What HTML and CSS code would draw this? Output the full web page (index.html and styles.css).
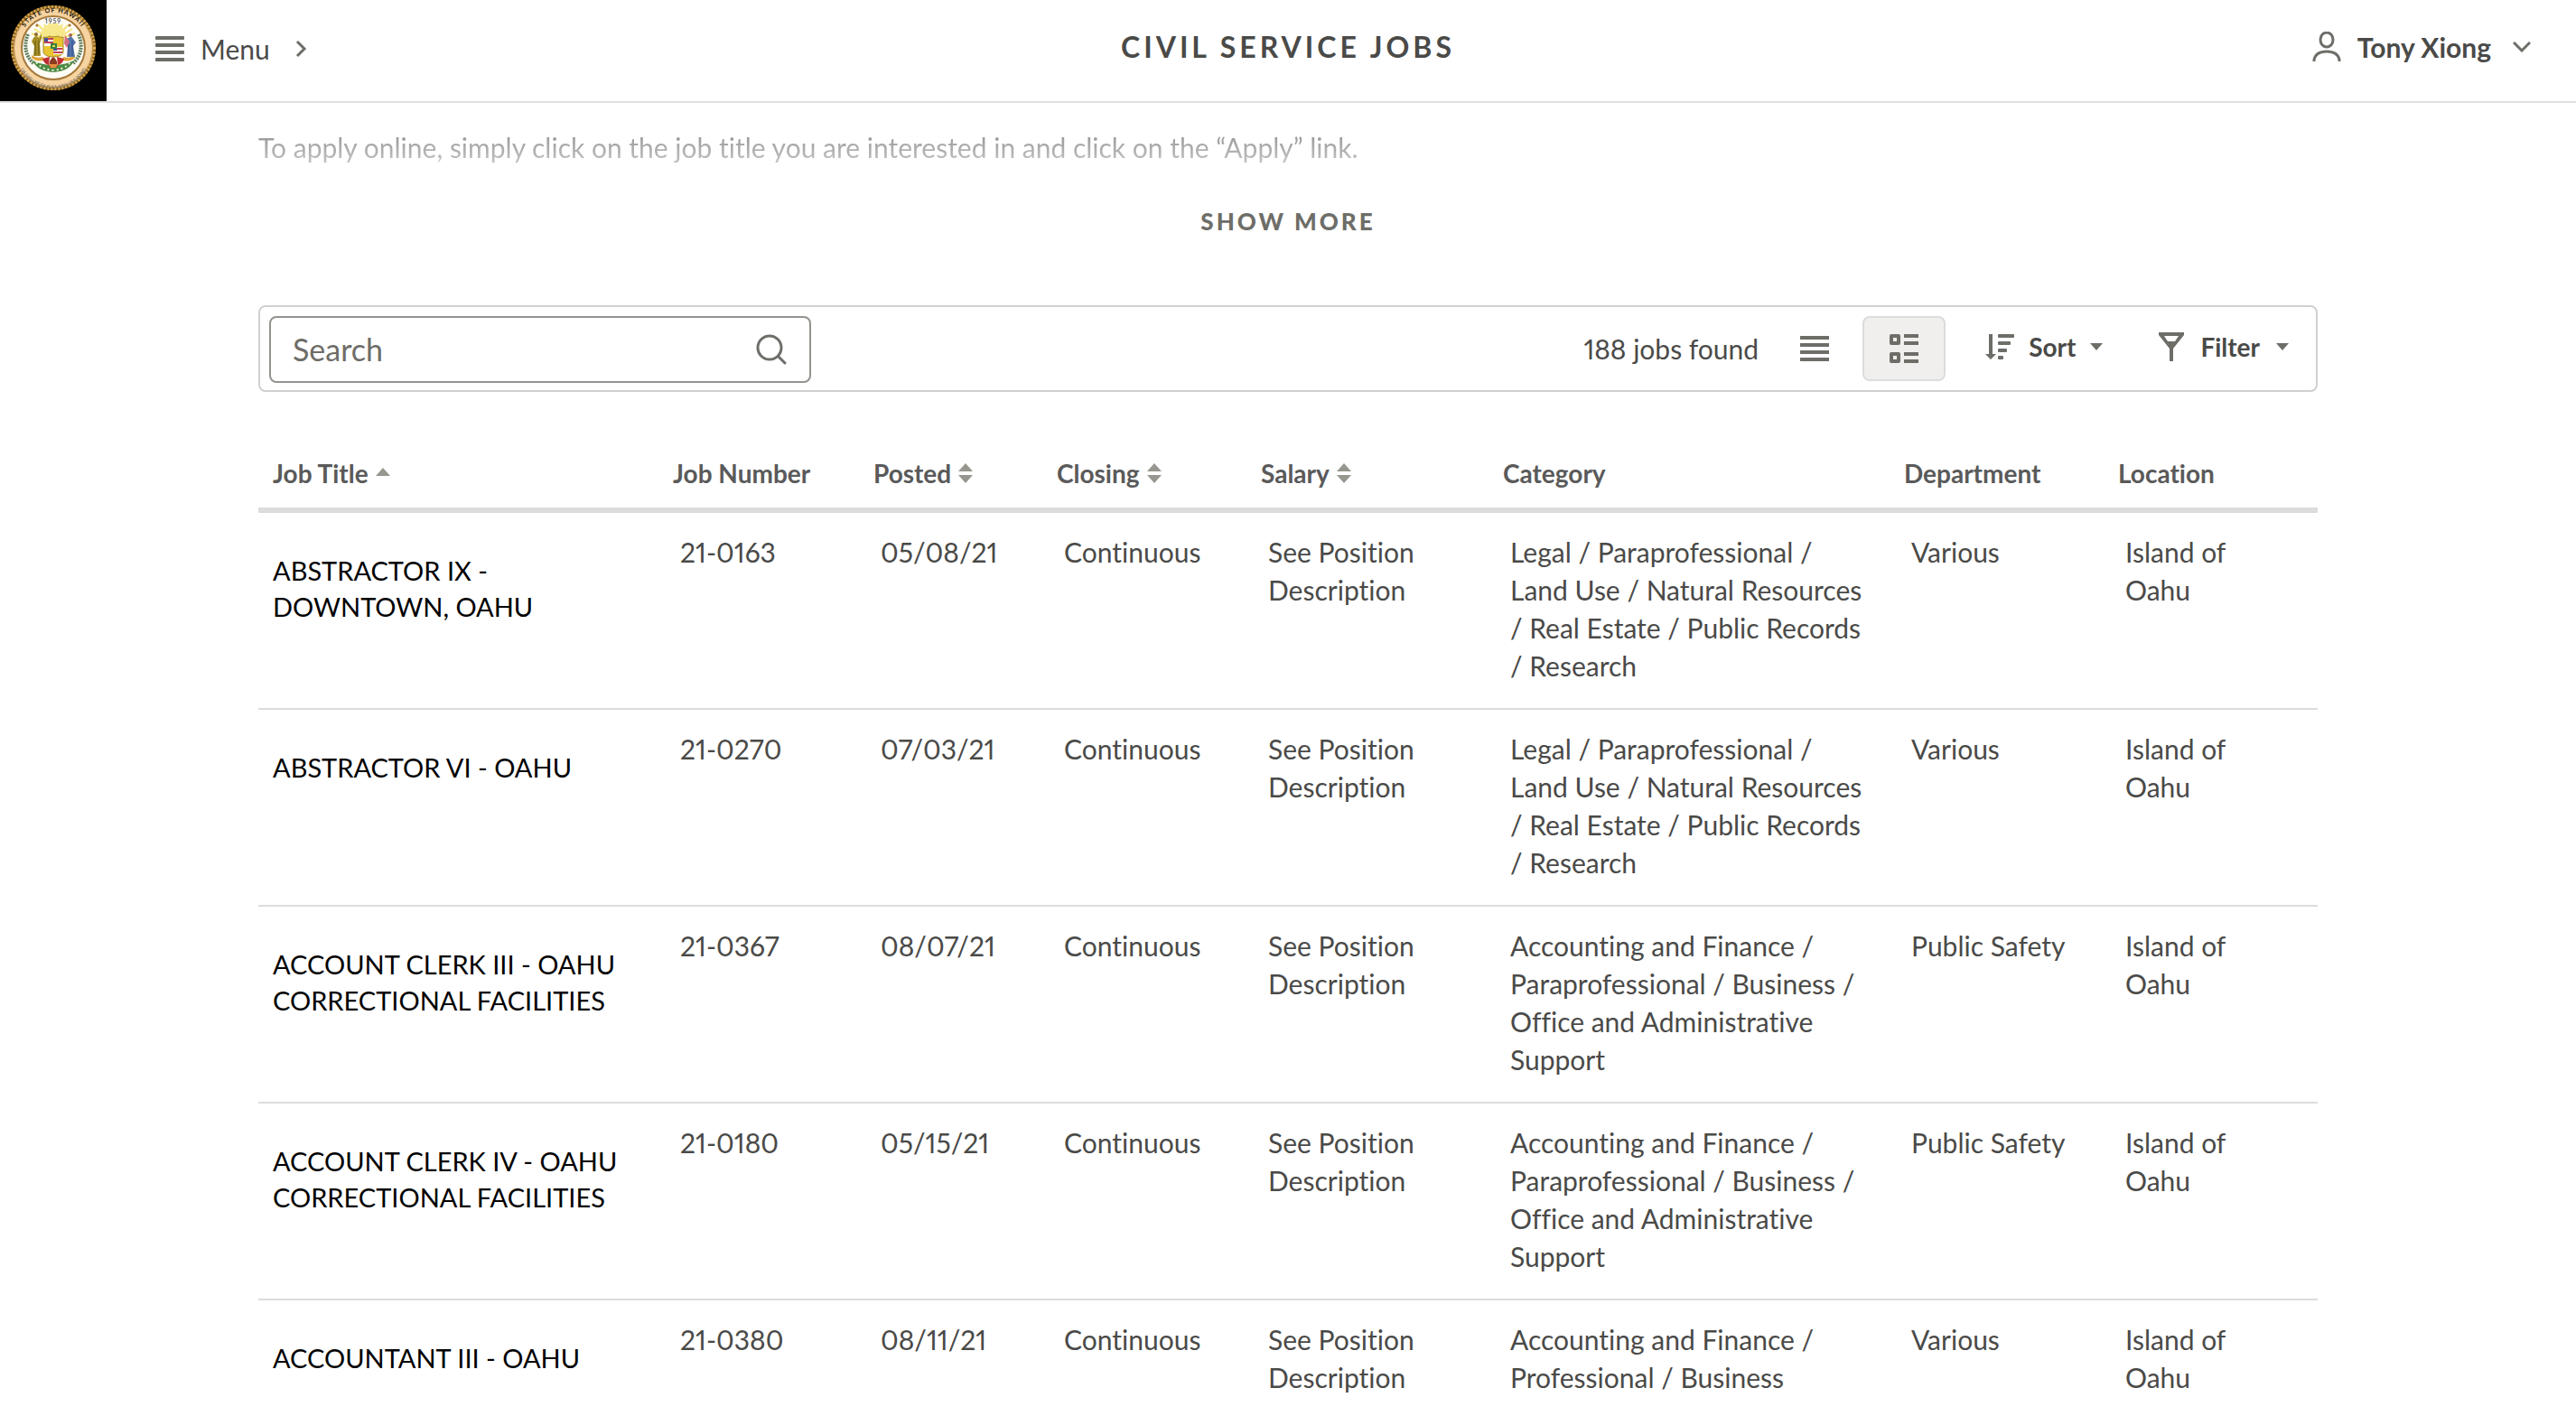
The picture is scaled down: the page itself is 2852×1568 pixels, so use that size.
FILE: index.html
```html
<!DOCTYPE html>
<html lang="en">
<head>
<meta charset="utf-8">
<meta name="viewport" content="width=device-width, initial-scale=1">
<title>Civil Service Jobs</title>
<link rel="stylesheet" href="styles.css">
</head>
<body>
<header class="topbar">
  <div class="topbar-side">
    <a class="brand" href="#" aria-label="State of Hawaii home">
      <svg class="seal" viewBox="0 0 118 112" aria-hidden="true">
        <defs>
          <path id="arc-top" d="M21 46a38.500 38.500 0 0 1 76 0"/>
          <path id="arc-bottom" d="M17 56a42 42 0 0 0 84 0"/>
        </defs>
        <circle cx="59" cy="53" r="45.500" fill="#f6d3a0" stroke="#8a6526" stroke-width="3"/>
        <circle cx="59" cy="53" r="45.500" fill="none" stroke="#d9a94e" stroke-width="3" stroke-dasharray="2 2"/>
        <circle cx="59" cy="53" r="43.500" fill="none" stroke="#b88a45"/>
        <circle cx="59" cy="53" r="35" fill="#fffdf6" stroke="#a5783a" stroke-width="2"/>
        <path d="M59 46 38 32M59 46 43 28M59 46 49 27M59 46 55 26M59 46 63 26M59 46 69 27M59 46 75 28M59 46 80 32M59 46 35 37M59 46 83 37" stroke="#f5e27a" stroke-width="2"/>
        <path d="M45 40a14 14 0 0 1 28 0z" fill="#f7e88c"/>
        <text class="seal-name"><textPath href="#arc-top" startOffset="50%">STATE OF HAWAII</textPath></text>
        <text class="seal-motto"><textPath href="#arc-bottom" startOffset="50%">UA MAU KE EA O KA AINA I KA PONO</textPath></text>
        <text class="seal-year" x="59" y="26">1959</text>
        <path d="m41 26 2 2-2 2-2-2zM77 26l2 2-2 2-2-2z" fill="#a9792e"/>
        <path d="M31 38c-5 12-3 24 6 32M87 38c5 12 3 24-6 32" fill="none" stroke="#5d7d5b" stroke-width="4" stroke-dasharray="2 1"/>
        <path d="M36 67q5 12 23 13 18-1 23-13-10 5-23 5t-23-5z" fill="#4d8a42"/>
        <path d="M40 69q7 8 19 9 12-1 19-9" fill="none" stroke="#e6efd8" stroke-width="2" stroke-dasharray="2 3"/>
        <path d="M35 61q5 4 13 2v4q-8 2-13-3zM83 61q-5 4-13 2v4q8 2 13-3z" fill="#e0a63c"/>
        <path d="M37 42q3-4 6 0l3-5v6l-2 5 1 14h-8l1-11-3-5z" fill="#a68e25"/>
        <path d="M39 45v16M43 45v15" stroke="#635816"/>
        <circle cx="40" cy="38" r="2" fill="#8c6b2d"/>
        <path d="M76 42q3-3 5 1l3 4-3 4 2 12h-9l1-12-3-8z" fill="#5475ae"/>
        <path d="M72 39l5 7-3 7-3-5z" fill="#d46e82"/>
        <path d="M80 45v17M76 49v13" stroke="#354d83"/>
        <circle cx="78" cy="39" r="2" fill="#9a6658"/>
        <path d="M48 41q5 1 6-1 5 2 10 0 2 2 6 1v17q-2 5-11 5t-11-5z" fill="#eac532" stroke="#a2892b"/>
        <path d="M49 42h10v9H49zM59 52h10v8H59z" fill="#fff"/>
        <path d="M49 43h10M49 47h10M59 54h10M59 58h10" stroke="#bf4052" stroke-width="2"/>
        <path d="M49 42h4v4h-4zM59 52h4v4h-4z" fill="#40519b"/>
        <path d="M56 48h7v6h-7z" fill="#37823c"/>
        <path d="M58 50h3v2h-3z" fill="#e9d45b"/>
        <path d="M47 65l8-2-1 9q-5-1-7-7zM71 65l-8-2 1 9q5-1 7-7z" fill="#bf2d33"/>
        <path d="M55 75q-2-8 4-12 6 4 4 12z" fill="#8b3a20"/>
        <path d="M54 71h10l-2 4h-6z" fill="#e8893c"/>
      </svg>
    </a>
    <button class="menu-button" type="button">
      <svg class="icon" width="32" height="28" viewBox="0 0 32 28" aria-hidden="true"><g fill="currentColor"><rect width="32" height="4" rx="1"/><rect y="8" width="32" height="4" rx="1"/><rect y="16" width="32" height="4" rx="1"/><rect y="24" width="32" height="4" rx="1"/></g></svg>
      <span>Menu</span>
      <svg class="icon menu-chevron" width="14" height="20" viewBox="0 0 14 20" aria-hidden="true"><path d="m2 2 8 8-8 8" fill="none" stroke="currentColor" stroke-width="3"/></svg>
    </button>
  </div>
  <h1 class="topbar-title">CIVIL SERVICE JOBS</h1>
  <div class="topbar-side topbar-end">
    <button class="user-button" type="button">
      <svg class="icon" width="32" height="34" viewBox="0 0 32 34" aria-hidden="true"><g fill="none" stroke="currentColor" stroke-width="3"><ellipse cx="16" cy="9" rx="7" ry="8"/><path d="M2 33v-2q2-9 14-9t14 9v2"/></g></svg>
      <span>Tony Xiong</span>
      <svg class="icon user-chevron" width="20" height="12" viewBox="0 0 20 12" aria-hidden="true"><path d="m1 1 9 9 9-9" fill="none" stroke="currentColor" stroke-width="3"/></svg>
    </button>
  </div>
</header>

<main class="page">
  <section class="intro">
    <p class="intro-text">To apply online, simply click on the job title you are interested in and click on the “Apply” link.</p>
    <button class="show-more" type="button">SHOW MORE</button>
  </section>

  <section class="toolbar" aria-label="Job list tools">
    <div class="search">
      <input class="search-input" type="text" placeholder="Search" aria-label="Search">
      <button class="search-button" type="button" aria-label="Run search">
        <svg class="icon" width="34" height="34" viewBox="0 0 34 34" aria-hidden="true"><g fill="none" stroke="currentColor" stroke-width="3" stroke-linecap="round"><circle cx="15" cy="15" r="13"/><path d="m25 25 7 7"/></g></svg>
      </button>
    </div>
    <div class="tools">
      <span class="job-count">188 jobs found</span>
      <div class="views">
        <button class="view-button" type="button" aria-label="List view">
          <svg class="icon" width="32" height="28" viewBox="0 0 32 28" aria-hidden="true"><path d="M0 0h32v4H0zM0 8h32v4H0zM0 16h32v4H0zM0 24h32v4H0z" fill="currentColor"/></svg>
        </button>
        <button class="view-button view-active" type="button" aria-label="Table view" aria-pressed="true">
          <svg class="icon" width="32" height="32" viewBox="0 0 32 32" aria-hidden="true"><g fill="none" stroke="currentColor" stroke-width="4" stroke-linejoin="round"><path d="M2 2h8v8H2zM2 22h8v8H2z"/><path d="M16 2h16M16 10h16M16 22h16M16 30h16"/></g></svg>
        </button>
      </div>
      <button class="tool-button" type="button">
        <svg class="icon" width="32" height="28" viewBox="0 0 32 28" aria-hidden="true"><g fill="currentColor"><path d="M4 0h4v22h4l-6 6-6-6h4z"/><rect x="14" width="18" height="4" rx="1"/><rect x="14" y="8" width="14" height="4" rx="1"/><rect x="14" y="16" width="10" height="4" rx="1"/><rect x="14" y="24" width="6" height="4" rx="1"/></g></svg>
        <span>Sort</span>
        <svg class="icon caret" width="14" height="8" viewBox="0 0 14 8" aria-hidden="true"><path d="M0 0h14L7 8z" fill="currentColor"/></svg>
      </button>
      <button class="tool-button tool-filter" type="button">
        <svg class="icon" width="28" height="32" viewBox="0 0 28 32" aria-hidden="true"><path d="M0 0h28v3L16 18v14h-4V18L0 3zM6 4l4 6h8l4-6z" fill="currentColor" fill-rule="evenodd"/></svg>
        <span>Filter</span>
        <svg class="icon caret" width="14" height="8" viewBox="0 0 14 8" aria-hidden="true"><path d="M0 0h14L7 8z" fill="currentColor"/></svg>
      </button>
    </div>
  </section>

  <table class="jobs">
    <colgroup>
      <col class="col-title"><col class="col-number"><col class="col-posted"><col class="col-closing"><col class="col-salary"><col class="col-category"><col class="col-department"><col class="col-location">
    </colgroup>
    <thead>
      <tr>
        <th scope="col" aria-sort="ascending"><button class="sort" type="button">Job Title <svg class="icon" width="16" height="22" viewBox="0 0 16 22" aria-hidden="true"><path d="m8 5 8 9H0z" fill="currentColor"/></svg></button></th>
        <th scope="col">Job Number</th>
        <th scope="col"><button class="sort" type="button">Posted <svg class="icon" width="16" height="22" viewBox="0 0 16 22" aria-hidden="true"><path d="m8 0 8 9H0zM0 13h16l-8 9z" fill="currentColor"/></svg></button></th>
        <th scope="col"><button class="sort" type="button">Closing <svg class="icon" width="16" height="22" viewBox="0 0 16 22" aria-hidden="true"><path d="m8 0 8 9H0zM0 13h16l-8 9z" fill="currentColor"/></svg></button></th>
        <th scope="col"><button class="sort" type="button">Salary <svg class="icon" width="16" height="22" viewBox="0 0 16 22" aria-hidden="true"><path d="m8 0 8 9H0zM0 13h16l-8 9z" fill="currentColor"/></svg></button></th>
        <th scope="col">Category</th>
        <th scope="col">Department</th>
        <th scope="col">Location</th>
      </tr>
    </thead>
    <tbody>
      <tr>
        <td class="title"><a href="#">ABSTRACTOR IX - DOWNTOWN, OAHU</a></td>
        <td>21-0163</td><td>05/08/21</td><td>Continuous</td><td>See Position Description</td>
        <td>Legal / Paraprofessional / Land Use / Natural Resources / Real Estate / Public Records / Research</td>
        <td>Various</td><td>Island of Oahu</td>
      </tr>
      <tr>
        <td class="title"><a href="#">ABSTRACTOR VI - OAHU</a></td>
        <td>21-0270</td><td>07/03/21</td><td>Continuous</td><td>See Position Description</td>
        <td>Legal / Paraprofessional / Land Use / Natural Resources / Real Estate / Public Records / Research</td>
        <td>Various</td><td>Island of Oahu</td>
      </tr>
      <tr>
        <td class="title"><a href="#">ACCOUNT CLERK III - OAHU CORRECTIONAL FACILITIES</a></td>
        <td>21-0367</td><td>08/07/21</td><td>Continuous</td><td>See Position Description</td>
        <td>Accounting and Finance / Paraprofessional / Business / Office and Administrative Support</td>
        <td>Public Safety</td><td>Island of Oahu</td>
      </tr>
      <tr>
        <td class="title"><a href="#">ACCOUNT CLERK IV - OAHU CORRECTIONAL FACILITIES</a></td>
        <td>21-0180</td><td>05/15/21</td><td>Continuous</td><td>See Position Description</td>
        <td>Accounting and Finance / Paraprofessional / Business / Office and Administrative Support</td>
        <td>Public Safety</td><td>Island of Oahu</td>
      </tr>
      <tr>
        <td class="title"><a href="#">ACCOUNTANT III - OAHU</a></td>
        <td>21-0380</td><td>08/11/21</td><td>Continuous</td><td>See Position Description</td>
        <td>Accounting and Finance / Professional / Business</td>
        <td>Various</td><td>Island of Oahu</td>
      </tr>
    </tbody>
  </table>
</main>
</body>
</html>
```
FILE: styles.css
```css
* { box-sizing: border-box; }

body {
  margin: 0;
  height: 100vh;
  display: flex;
  flex-direction: column;
  overflow: hidden;
  background: #fff;
  color: #4a4a48;
  font: 400 30px/42px Lato, "Open Sans", sans-serif;
  font-variant-numeric: proportional-nums;
  font-variant-ligatures: none;
}

button {
  display: flex;
  align-items: center;
  padding: 0;
  border: 0;
  background: none;
  color: inherit;
  font: inherit;
  cursor: pointer;
}

.icon {
  flex: none;
  display: block;
  color: #6e6d68;
}

/* Top bar */
.topbar {
  flex: none;
  display: grid;
  grid-template-columns: 1fr auto 1fr;
  align-items: center;
  height: 114px;
  border-bottom: 2px solid #e0e0e0;
}
.topbar-side {
  display: flex;
  align-items: center;
}
.topbar-end {
  justify-content: flex-end;
  padding-right: 50px;
}
.brand {
  width: 118px;
  height: 112px;
  background: #000;
}
.seal { display: block; }
.seal text {
  font-weight: 700;
  text-anchor: middle;
}
.seal-name { font-size: 7px; fill: #17130c; letter-spacing: 1px; }
.seal-motto { font-size: 5px; fill: #81796f; }
.seal-year { font-size: 7px; fill: #54545c; letter-spacing: 1px; }
.menu-button {
  gap: 18px;
  padding: 0 0 4px 54px;
}
.menu-chevron { margin-left: 10px; }
.topbar-title {
  margin: 0;
  padding-bottom: 8px;
  font-size: 32px;
  font-weight: 700;
  letter-spacing: 4px;
}
.user-button {
  gap: 18px;
  padding-bottom: 8px;
  font-weight: 700;
}
.user-chevron { margin-left: 6px; }

/* Page body */
.page {
  flex: 1;
  min-height: 0;
  width: 80%;
  max-width: 2280px;
  margin: 0 auto;
}
.intro {
  display: flex;
  flex-direction: column;
  align-items: center;
  gap: 40px;
  padding: 28px 0 72px;
}
.intro-text {
  align-self: stretch;
  margin: 0;
  background: linear-gradient(#949494 10%, #c8c8c8 100%);
  background-clip: text;
  color: transparent;
}
.show-more {
  color: #6e6d68;
  font-size: 26px;
  font-weight: 900;
  letter-spacing: 3px;
}

/* Toolbar */
.toolbar {
  display: flex;
  align-items: center;
  justify-content: space-between;
  padding: 10px 10px 8px;
  border: 2px solid #d0d0d0;
  border-radius: 8px;
}
.search {
  display: flex;
  width: 600px;
  height: 74px;
  border: 2px solid #93938e;
  border-radius: 8px;
}
.search-input {
  flex: 1;
  min-width: 0;
  padding: 0 24px;
  border: 0;
  background: none;
  color: inherit;
  font: inherit;
  font-size: 34px;
}
.search-input::placeholder {
  color: #6e6d68;
  opacity: 1;
}
.search-button { padding: 0 25px; }
.tools {
  display: flex;
  align-items: center;
  padding: 0 20px 2px 0;
}
.views {
  display: flex;
  gap: 7px;
  margin: 0 44px 0 16px;
}
.view-button {
  justify-content: center;
  width: 92px;
  height: 72px;
  border: 2px solid transparent;
  border-radius: 8px;
}
.view-active {
  border-color: #dcdcdc;
  background: #f0efed;
}
.tool-button {
  gap: 16px;
  padding-bottom: 4px;
  font-size: 28px;
  font-weight: 700;
}
.tool-filter {
  margin-left: 62px;
  gap: 18px;
}

/* Job table */
.jobs {
  width: 100%;
  margin-top: 44px;
  border-collapse: separate;
  border-spacing: 0;
  table-layout: fixed;
}
.col-title { width: 443px; }
.col-number { width: 222px; }
.col-posted { width: 203px; }
.col-closing { width: 226px; }
.col-salary { width: 268px; }
.col-category { width: 444px; }
.col-department { width: 237px; }
.col-location { width: 237px; }
.jobs th {
  padding: 25px 0 17px 16px;
  border-bottom: 6px solid #dcdcdc;
  color: #5a5a5a;
  font-size: 28px;
  font-weight: 700;
  text-align: left;
}
.sort { gap: 8px; }
.sort .icon { color: #97968f; }
.jobs td {
  padding: 22px 24px 26px;
  border-bottom: 2px solid #dcdcdc;
  vertical-align: top;
}
.jobs .title {
  padding: 44px 32px 24px 16px;
  font-size: 29px;
  line-height: 40px;
}
.title a {
  color: #000;
  text-decoration: none;
}
```
